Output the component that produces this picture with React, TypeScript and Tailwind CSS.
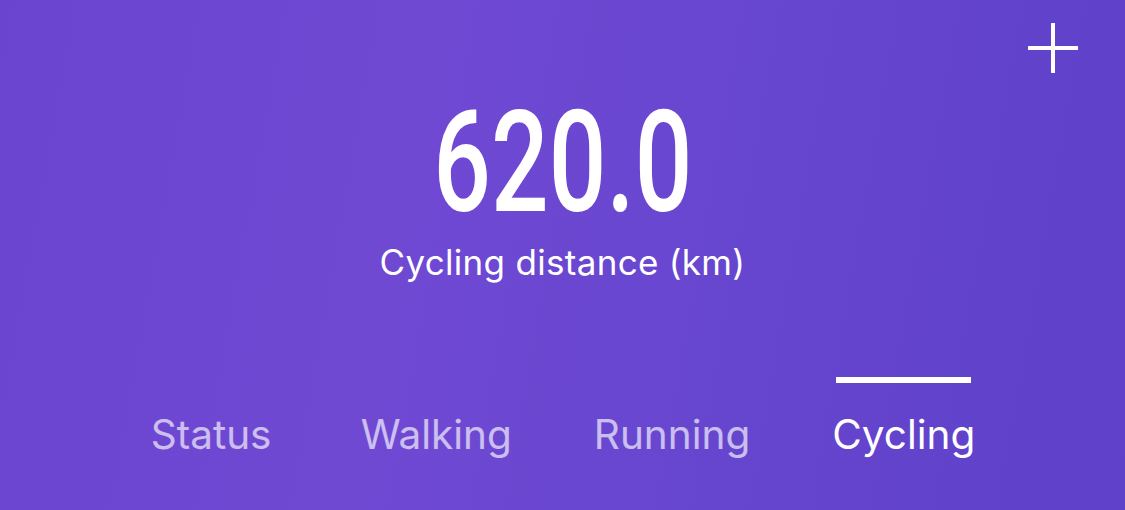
const tabs = ["Status", "Walking", "Running", "Cycling"];

function PlusIcon() {
  return (
    <svg width="50" height="50" viewBox="0 0 50 50" fill="none">
      <path d="M25 1v48M1 25h48" stroke="white" strokeWidth="4" strokeLinecap="round" />
    </svg>
  );
}

export default function App() {
  return (
    <div className="w-[1125px] h-[510px] overflow-hidden flex flex-col bg-[linear-gradient(100deg,#6a43cf_0%,#7049d3_35%,#6746cf_65%,#5e40c9_100%)] font-['Inter',sans-serif] text-white">
      <div className="flex justify-end pt-[23px] pr-[47px] h-[80px]">
        <PlusIcon />
      </div>

      <div className="flex flex-col items-center">
        <div className="font-['Roboto',sans-serif] font-medium text-[141px] leading-none scale-x-[0.72] mt-[12px]">
          620.0
        </div>
        <div className="text-[35px] leading-none tracking-[0.3px] mt-[12px]">Cycling distance (km)</div>
      </div>

      <div className="flex justify-center gap-[82px] mt-[97px] -translate-x-[3px]">
        {tabs.map((t) => {
          const active = t === "Cycling";
          return (
            <div key={t} className="flex flex-col items-center">
              <div className={active ? "w-[135px] h-[6px] bg-white" : "w-[135px] h-[6px]"} />
              <div
                className={
                  active
                    ? "mt-[32px] text-[40.5px] leading-none text-white"
                    : "mt-[32px] text-[40.5px] leading-none text-white/65"
                }
              >
                {t}
              </div>
            </div>
          );
        })}
      </div>
    </div>
  );
}
